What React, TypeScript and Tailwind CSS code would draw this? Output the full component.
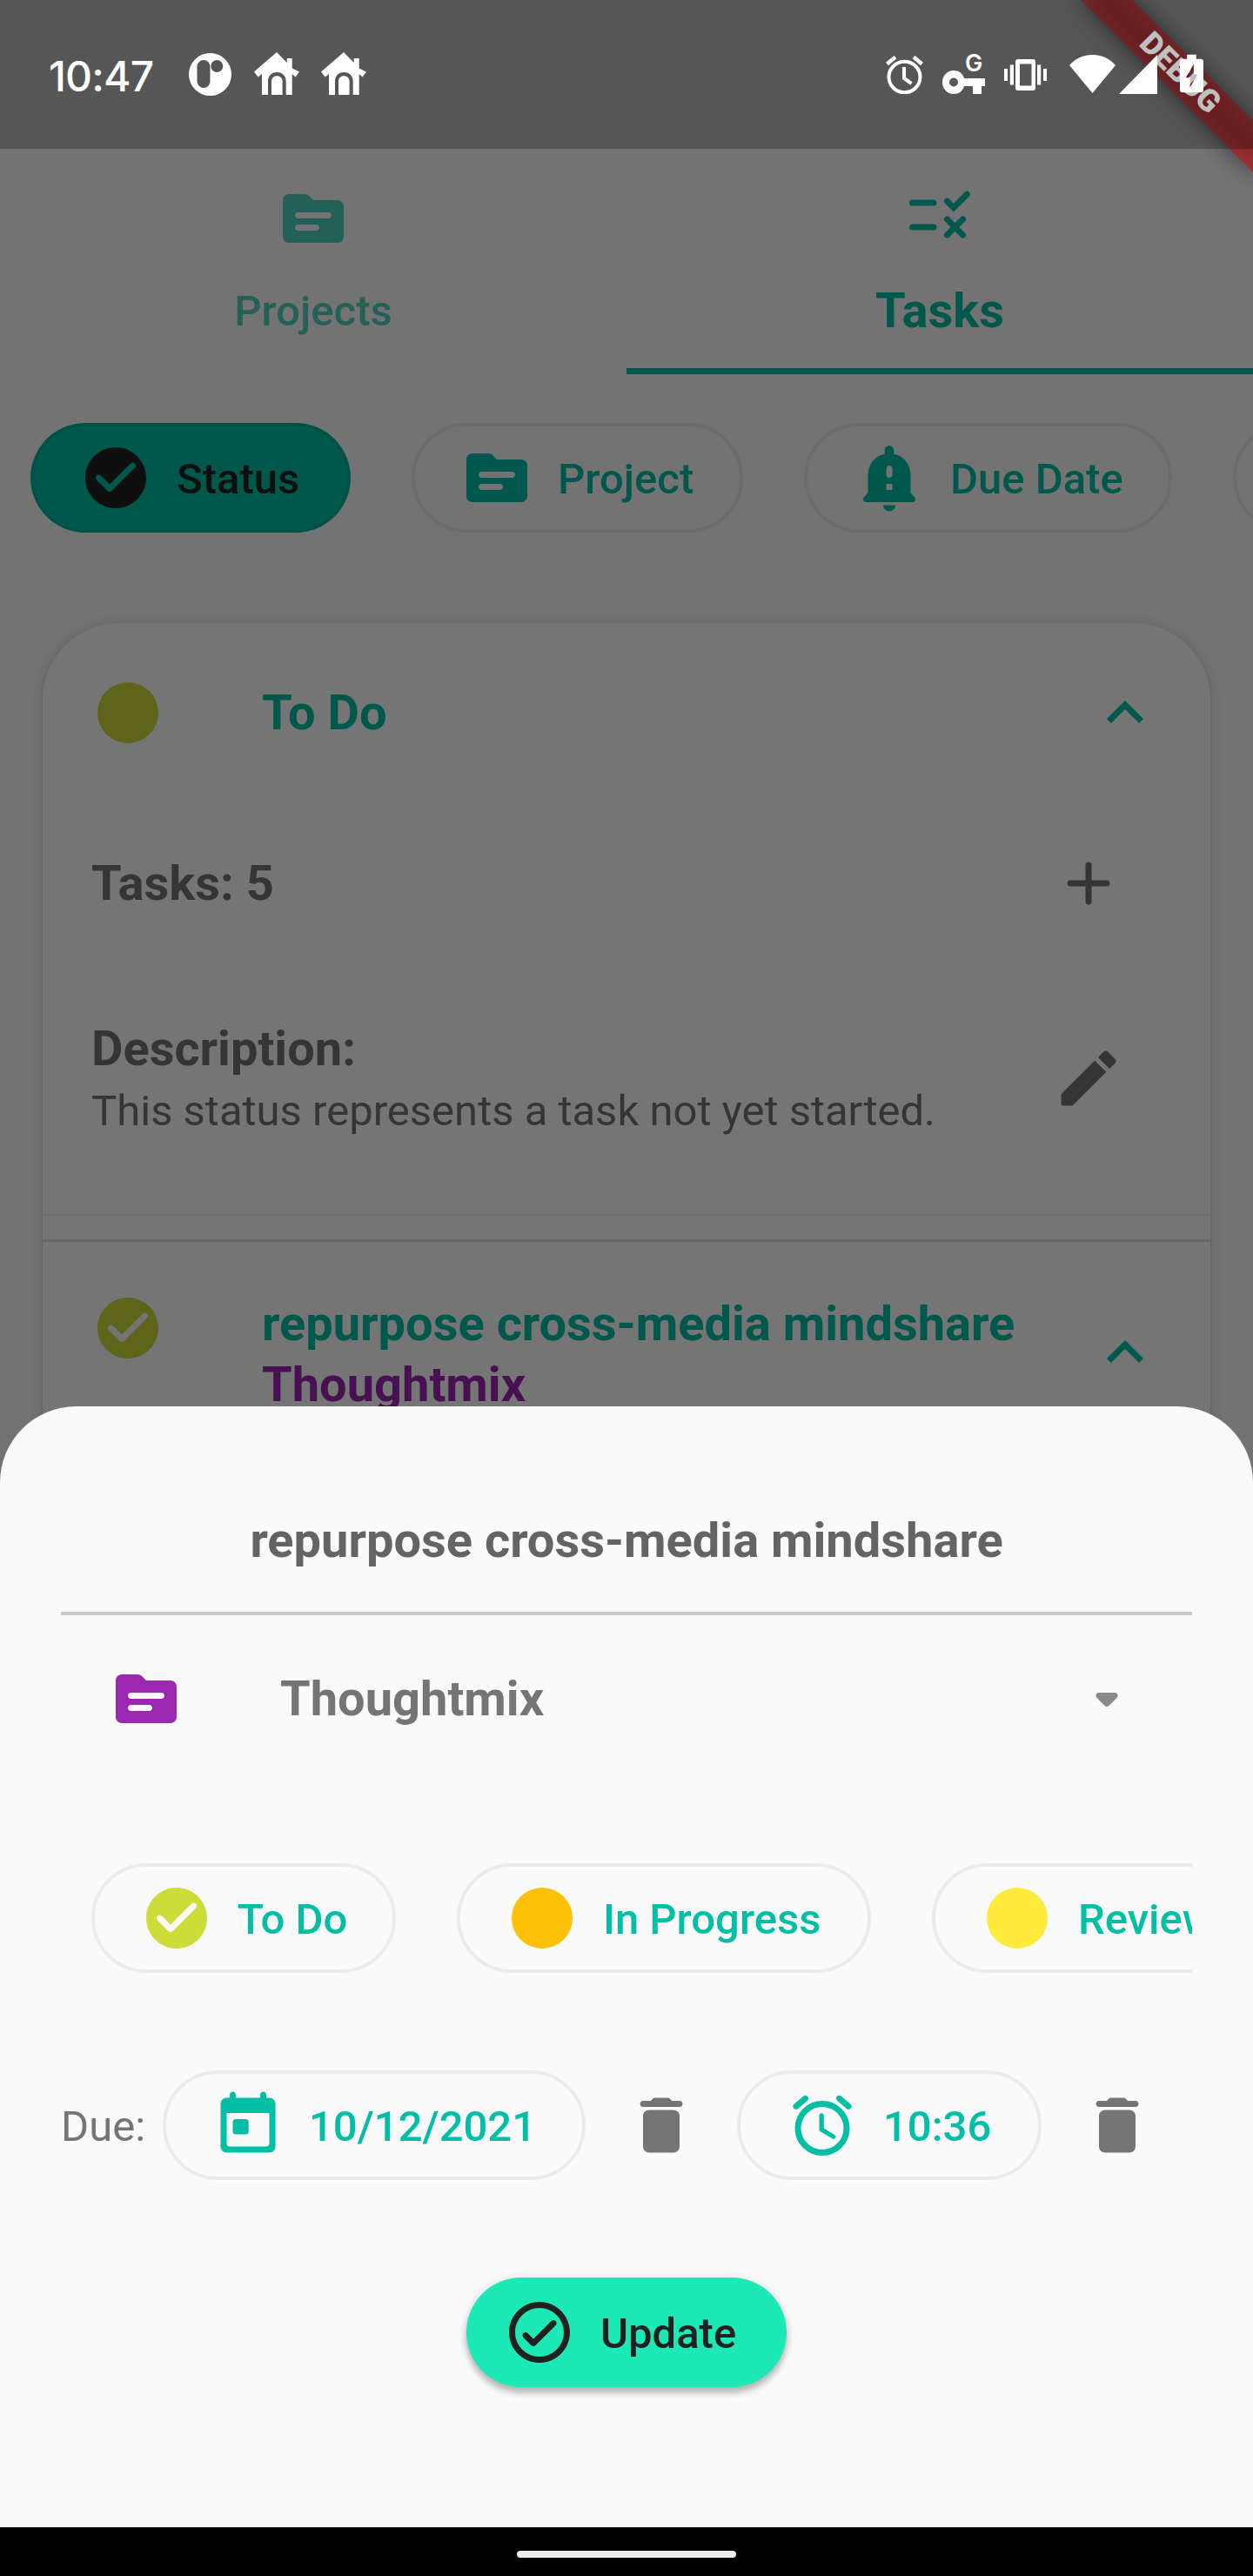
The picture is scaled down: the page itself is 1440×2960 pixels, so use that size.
import type { ReactNode } from "react";

type IconProps = { className?: string; children: ReactNode };

function Icon({ className = "", children }: IconProps) {
  return (
    <svg viewBox="0 0 24 24" fill="currentColor" className={`size-[84px] shrink-0 ${className}`}>
      {children}
    </svg>
  );
}

const FolderIcon = ({ className }: { className?: string }) => (
  <Icon className={className}>
    <path
      fillRule="evenodd"
      d="M20 6h-8l-1.41-1.41C10.21 4.21 9.7 4 9.17 4H4c-1.1 0-2 .9-2 2v12c0 1.1.9 2 2 2h16c1.1 0 2-.9 2-2V8c0-1.1-.9-2-2-2zM13 16H7c-.55 0-1-.45-1-1s.45-1 1-1h6c.55 0 1 .45 1 1s-.45 1-1 1zM17 12H7c-.55 0-1-.45-1-1s.45-1 1-1h10c.55 0 1 .45 1 1s-.45 1-1 1z"
    />
  </Icon>
);

const RuleIcon = () => (
  <Icon>
    <g fill="none" stroke="currentColor" strokeWidth="2" strokeLinecap="round">
      <path d="M3 8h7M3 16h7" />
      <path d="M14.44 7.5l2.1 2.1 4.4-4.4" strokeLinejoin="miter" />
      <path d="M14.4 13.4l5.2 5.2M19.6 13.4l-5.2 5.2" />
    </g>
  </Icon>
);

const CheckCircle = ({ className }: { className?: string }) => (
  <Icon className={className}>
    <path d="M12 2C6.48 2 2 6.48 2 12s4.48 10 10 10 10-4.48 10-10S17.52 2 12 2zM9.29 16.29L5.7 12.7c-.39-.39-.39-1.02 0-1.41.39-.39 1.02-.39 1.41 0L10 14.17l6.88-6.88c.39-.39 1.02-.39 1.41 0 .39.39.39 1.02 0 1.41l-7.59 7.59c-.38.39-1.02.39-1.41 0z" />
  </Icon>
);

const CheckCircleOutline = () => (
  <Icon>
    <path d="M12 2C6.48 2 2 6.48 2 12s4.48 10 10 10 10-4.48 10-10S17.52 2 12 2zm0 18c-4.41 0-8-3.59-8-8s3.59-8 8-8 8 3.59 8 8-3.59 8-8 8zm3.88-11.71L10 14.17l-1.88-1.88c-.39-.39-1.02-.39-1.41 0-.39.39-.39 1.02 0 1.41l2.59 2.59c.39.39 1.02.39 1.41 0L17.3 9.7c.39-.39.39-1.02 0-1.41-.39-.39-1.03-.39-1.42 0z" />
  </Icon>
);

const Dot = ({ className }: { className?: string }) => (
  <Icon className={className}>
    <circle cx="12" cy="12" r="10" />
  </Icon>
);

const BellIcon = () => (
  <Icon>
    <path
      fillRule="evenodd"
      d="M19 17v-6c0-3.35-2.36-6.15-5.5-6.83V3c0-.83-.67-1.5-1.5-1.5s-1.5.67-1.5 1.5v1.17C7.36 4.85 5 7.65 5 11v6l-1.29 1.29C3.08 18.92 3.52 20 4.41 20h15.17c.89 0 1.34-1.08.71-1.71L19 17zM13 16h-2v-2h2v2zM13 11c0 .55-.45 1-1 1s-1-.45-1-1V9c0-.55.45-1 1-1s1 .45 1 1v2zM10 21.01h4c0 1.1-.89 1.99-1.99 1.99S10 22.11 10 21.01z"
    />
  </Icon>
);

const ExpandLess = ({ className }: { className?: string }) => (
  <Icon className={className}>
    <path d="M12 8l-6 6 1.41 1.41L12 10.83l4.59 4.58L18 14z" />
  </Icon>
);

const PlusIcon = () => (
  <Icon>
    <path d="M12 6v12M6 12h12" stroke="currentColor" strokeWidth="2" strokeLinecap="round" />
  </Icon>
);

const PencilIcon = () => (
  <Icon>
    <path d="M3 17.46v3.04c0 .28.22.5.5.5h3.04c.13 0 .26-.05.35-.15L17.81 9.94l-3.75-3.75L3.15 17.1c-.1.1-.15.22-.15.36zM20.71 7.04c.39-.39.39-1.02 0-1.41l-2.34-2.34c-.39-.39-1.02-.39-1.41 0l-1.83 1.83 3.75 3.75 1.83-1.83z" />
  </Icon>
);

const DropDownIcon = () => (
  <Icon className="text-[#8a8a8a]">
    <path d="M8.71 11.71l2.59 2.59c.39.39 1.02.39 1.41 0l2.59-2.59c.63-.63.18-1.71-.71-1.71H9.41c-.89 0-1.33 1.08-.7 1.71z" />
  </Icon>
);

const TrashIcon = () => (
  <Icon className="text-[#757575]">
    <path d="M6 19c0 1.1.9 2 2 2h8c1.1 0 2-.9 2-2V9c0-1.1-.9-2-2-2H8c-1.1 0-2 .9-2 2v10zM18 4h-2.5l-.71-.71c-.18-.18-.44-.29-.7-.29H9.91c-.26 0-.52.11-.7.29L8.5 4H6c-.55 0-1 .45-1 1s.45 1 1 1h12c.55 0 1-.45 1-1s-.45-1-1-1z" />
  </Icon>
);

const TodayIcon = () => (
  <Icon>
    <path
      fillRule="evenodd"
      d="M19 3h-1V2c0-.55-.45-1-1-1s-1 .45-1 1v1H8V2c0-.55-.45-1-1-1s-1 .45-1 1v1H5c-1.11 0-1.99.9-1.99 2L3 19c0 1.1.89 2 2 2h14c1.1 0 2-.9 2-2V5c0-1.1-.9-2-2-2zM18 19H6c-.55 0-1-.45-1-1V8h14v10c0 .55-.45 1-1 1z"
    />
    <rect x="7" y="10" width="5.2" height="5" rx="1" />
  </Icon>
);

const AlarmIcon = () => (
  <Icon>
    <g fill="none" stroke="currentColor" strokeLinecap="round">
      <circle cx="12" cy="13" r="8" strokeWidth="2" />
      <path d="M3.4 5.8l3-2.55M20.6 5.8l-3-2.55" strokeWidth="2" />
      <path d="M11.75 8.8v4.6l3.9 2.35" strokeWidth="1.5" strokeLinejoin="round" />
    </g>
  </Icon>
);

const HouseIcon = ({ className = "" }: { className?: string }) => (
  <svg viewBox="0 0 52 49" className={`h-[49px] w-[52px] shrink-0 ${className}`} fill="#fff">
    <path d="M26 0L37.7 12V7h6v11.5L52 22.5 47.5 28.4 43.7 25v24h-7V33.500c0-6-4-10.500-10.400-10.500S16 27.500 16 33.500V49H9V25l-4.400 3.400L0 22.500z" />
    <path d="M20 49V33.500c0-3.800 2.600-6.200 6.300-6.200s6.300 2.400 6.300 6.200V49z" />
  </svg>
);

function StatusBar() {
  return (
    <header className="relative z-30 flex h-[171px] bg-black/25 text-white">
      <span className="ml-[56px] mt-[59px] w-[161px] font-[Inter,sans-serif] text-[48px] font-medium leading-[58px] tracking-[-0.8px]">
        10:47
      </span>
      <svg viewBox="0 0 49 49" className="mt-[61px] size-[49px]">
        <path
          fill="#fff"
          fillRule="evenodd"
          d="M24.500 0a24.500 24.500 0 1 1 0 49a24.500 24.500 0 1 1 0-49zM17 8a7.500 7.500 0 0 0-7.500 7.500v17a7.500 7.500 0 0 0 15 0v-17A7.500 7.500 0 0 0 17 8zM32.300 8a7 7 0 1 0 0 14a7 7 0 1 0 0-14z"
        />
      </svg>
      <HouseIcon className="ml-[26px] mt-[60px]" />
      <HouseIcon className="ml-[25px] mt-[60px]" />
      <svg viewBox="0 0 43 44" className="ml-[597px] mt-[64px] h-[44px] w-[43px]" fill="none" stroke="#fff">
        <ellipse cx="21.500" cy="24.500" rx="18" ry="17.700" strokeWidth="4" />
        <path d="M21 13v13l8.500 6" strokeWidth="4" />
        <path d="M1.500 9.500l9.500-8M41.500 9.500l-9.500-8" strokeWidth="4.500" />
      </svg>
      <div className="relative ml-[22px] mt-[81px] h-[27px] w-[49px]">
        <svg viewBox="0 0 49 27" className="h-[27px] w-[49px]" fill="#fff">
          <path
            fillRule="evenodd"
            d="M13 0c5.800 0 10.300 3.300 12.200 9H49v9h-4v9H35v-9h-9.800C23.300 23.700 18.800 27 13 27C5.600 27 0 21 0 13.500S5.600 0 13 0zM13 8.500a5 5 0 1 0 0 10a5 5 0 1 0 0-10z"
          />
        </svg>
        <span className="absolute -top-[22px] left-[26px] font-[Inter,sans-serif] text-[27px] font-semibold leading-[28px]">G</span>
      </div>
      <svg viewBox="0 0 49 36" className="ml-[22px] mt-[68px] h-[36px] w-[49px]" fill="#fff">
        <path
          fillRule="evenodd"
          d="M16 0h17a3 3 0 0 1 3 3v30a3 3 0 0 1-3 3H16a3 3 0 0 1-3-3V3a3 3 0 0 1 3-3zM18 5.500v25h13.500v-25z"
        />
        <path d="M0 11h4v14H0zM6.800 6.500h4.200v23H6.800zM38 6.500h4.200v23H38zM45 11h4v14h-4z" />
      </svg>
      <svg viewBox="0 0 53 44" className="ml-[26px] mt-[63px] h-[44px] w-[53px]" fill="#fff">
        <path d="M26.500 44L0 12C7 4 16 0 26.500 0S46 4 53 12z" />
      </svg>
      <svg viewBox="0 0 44 45" className="ml-[4px] mt-[63px] h-[45px] w-[44px]" fill="#fff">
        <path d="M0 45L44 0v45z" />
      </svg>
      <svg viewBox="0 0 28 45" className="ml-[26px] mt-[62px] h-[45px] w-[27px]" fill="#fff">
        <path
          fillRule="evenodd"
          d="M8.500 0h11v5H25a3 3 0 0 1 3 3v34a3 3 0 0 1-3 3H3a3 3 0 0 1-3-3V8a3 3 0 0 1 3-3h5.500zM16.500 11L7 27.500h5V39l9-15.500h-4.500z"
        />
      </svg>
    </header>
  );
}

function DebugBanner() {
  return (
    <div className="absolute left-full top-0 z-20 size-0 origin-top-left rotate-45">
      <div className="absolute -left-[140px] top-[98px] h-[42px] w-[280px] bg-black/50 blur-[13px]" />
      <div className="absolute -left-[140px] top-[98px] flex h-[42px] w-[280px] items-center justify-center bg-[#b71c1c]/63 text-[35.7px] font-black leading-none text-white">
        DEBUG
      </div>
    </div>
  );
}

type ChipProps = { width: string; icon: ReactNode; label: string; selected?: boolean };

function Chip({ width, icon, label, selected = false }: ChipProps) {
  const tone = selected ? "bg-[#00bfa5] text-[#212121]" : "text-[#00bfa5]";
  return (
    <button
      className={`flex h-[126px] shrink-0 items-center gap-[28px] rounded-full border-[4px] border-black/6 bg-clip-border pl-[52px] text-[49px] font-medium whitespace-nowrap ${tone} ${width}`}
    >
      {icon}
      <span className="relative top-[2px]">{label}</span>
    </button>
  );
}

function Tabs() {
  return (
    <nav className="flex h-[259px]">
      <div className="flex h-[252px] w-[720px] flex-col items-center justify-center gap-[35px] text-[#00bfa5]/70">
        <FolderIcon />
        <span className="relative top-px text-[49px] font-medium leading-[57px]">Projects</span>
      </div>
      <div className="flex w-[720px] flex-col items-center justify-center gap-[35px] border-b-[7px] border-[#00bfa5] text-[#00bfa5]">
        <RuleIcon />
        <span className="text-[56px] font-bold leading-[66px]">Tasks</span>
      </div>
    </nav>
  );
}

function StatusCard() {
  return (
    <section className="mx-[49px] mt-[104px] h-[1500px] rounded-[87.5px] bg-white text-[#757575] shadow-[0_3px_4px_rgba(0,0,0,0.1),0_2px_14px_rgba(0,0,0,0.16)]">
      <div className="flex h-[206px] items-center pl-[56px] pr-[56px] text-[#00bfa5]">
        <Dot className="text-[#cddc39]" />
        <h2 className="ml-[112px] flex-1 text-[56px] font-bold leading-[66px]">To Do</h2>
        <ExpandLess />
      </div>
      <div className="flex h-[186px] items-center justify-between pl-[56px] pr-[98px]">
        <span className="text-[56px] font-bold leading-[66px]">Tasks: 5</span>
        <PlusIcon />
      </div>
      <div className="flex h-[262px] items-center justify-between pl-[56px] pr-[98px]">
        <div className="flex flex-col gap-[10px]">
          <span className="text-[56px] font-bold leading-[66px]">Description:</span>
          <span className="text-[49px] leading-[58px]">This status represents a task not yet started.</span>
        </div>
        <PencilIcon />
      </div>
      <div className="mt-[25px] h-[2px] bg-black/6" />
      <div className="mt-[27px] h-[3px] bg-black/12" />
      <div className="flex items-start pl-[56px] pr-[56px] pt-[57px]">
        <CheckCircle className="text-[#cddc39]" />
        <div className="ml-[112px] mt-[2px] flex flex-1 flex-col text-[56px] font-bold leading-[70px]">
          <span className="text-[#00bfa5]">repurpose cross-media mindshare</span>
          <span className="text-[#9c27b0]">Thoughtmix</span>
        </div>
        <ExpandLess className="mt-[28px] text-[#00bfa5]" />
      </div>
    </section>
  );
}

function TaskSheet() {
  return (
    <section className="absolute inset-x-0 bottom-[56px] z-20 flex h-[1288px] flex-col rounded-t-[87.5px] bg-[#fafafa] px-[70px]">
      <h1 className="mt-[121px] text-center text-[56px] font-bold leading-[66px] text-[#646464]">
        repurpose cross-media mindshare
      </h1>
      <div className="mt-[49px] h-[4px] bg-[#c9c9c9]" />
      <div className="mt-[54px] flex items-center pl-[56px] pr-[56px]">
        <FolderIcon className="text-[#9c27b0]" />
        <span className="ml-[112px] flex-1 text-[56px] font-bold leading-[66px] text-[#757575]">Thoughtmix</span>
        <DropDownIcon />
      </div>
      <div className="mt-[147px] flex gap-[70px] overflow-hidden pl-[35px]">
        <Chip width="w-[350px]" icon={<CheckCircle className="text-[#cddc39]" />} label="To Do" />
        <Chip width="w-[476px]" icon={<Dot className="text-[#ffc107]" />} label="In Progress" />
        <Chip width="w-[380px]" icon={<Dot className="text-[#ffeb3b]" />} label="Review" />
      </div>
      <div className="mt-[112px] flex items-center">
        <span className="relative top-[2px] w-[117px] text-[49px] text-[#757575]">Due:</span>
        <Chip width="w-[486px]" icon={<TodayIcon />} label="10/12/2021" />
        <div className="flex w-[174px] justify-center">
          <TrashIcon />
        </div>
        <Chip width="w-[350px]" icon={<AlarmIcon />} label="10:36" />
        <div className="flex w-[173px] justify-center">
          <TrashIcon />
        </div>
      </div>
      <button className="mt-[112px] flex h-[126px] w-[368px] items-center gap-[28px] self-center rounded-full bg-[#1de9b6] pl-[42px] text-[49px] font-medium text-[#212121] shadow-[0_7px_7px_rgba(0,0,0,0.2),0_2px_12px_rgba(0,0,0,0.15)]">
        <CheckCircleOutline />
        <span className="relative top-[2px]">Update</span>
      </button>
    </section>
  );
}

export default function App() {
  return (
    <div className="relative h-[2960px] w-[1440px] overflow-hidden bg-[#fafafa] font-[Roboto,sans-serif]">
      <StatusBar />
      <Tabs />
      <div className="mt-[56px] flex gap-[70px] overflow-hidden pl-[35px]">
        <Chip width="w-[368px]" icon={<CheckCircle />} label="Status" selected />
        <Chip width="w-[381px]" icon={<FolderIcon />} label="Project" />
        <Chip width="w-[423px]" icon={<BellIcon />} label="Due Date" />
        <Chip width="w-[380px]" icon={<Dot />} label="" />
      </div>
      <StatusCard />
      <div className="absolute inset-0 z-10 bg-black/54" />
      <TaskSheet />
      <DebugBanner />
      <footer className="absolute inset-x-0 bottom-0 z-20 flex h-[56px] justify-center bg-black pt-[27px]">
        <div className="h-[8px] w-[252px] rounded-full bg-[#ebebeb]" />
      </footer>
    </div>
  );
}
